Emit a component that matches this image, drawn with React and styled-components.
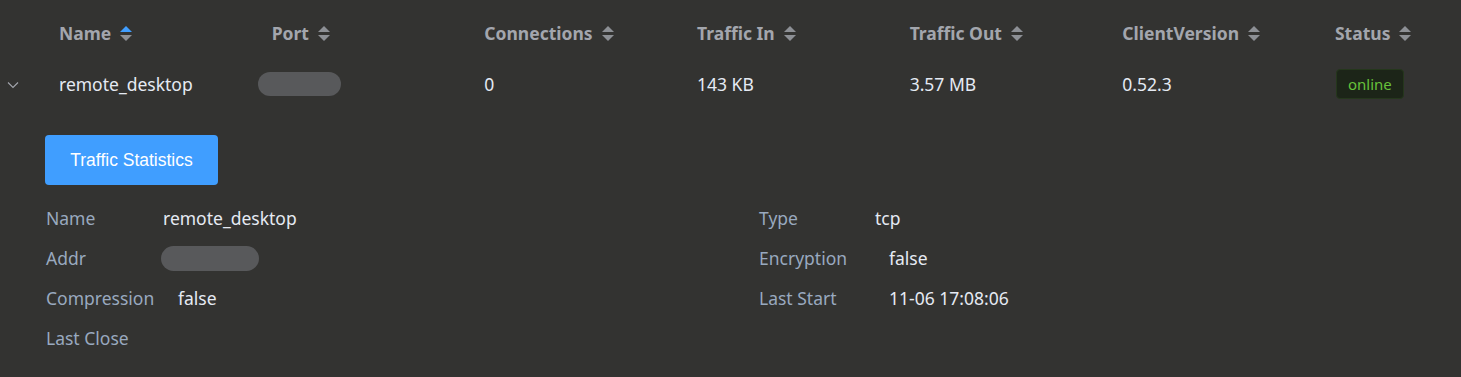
import React from 'react';
import styled, { createGlobalStyle } from 'styled-components';

const GlobalStyle = createGlobalStyle`
    html, body {
        margin: 0;
        padding: 0;
        background: #333331;
        overflow: hidden;
    }
    body {
        font-family: "Noto Sans", "Open Sans", sans-serif;
    }
`;

const Table = styled.div`
    width: 1461px;
    height: 377px;
    background: #333331;
    color: #e5eaf3;
`;

const Row = styled.div`
    display: grid;
    grid-template-columns: 47px repeat(6, 212.67px) 1fr;
    align-items: center;
    height: ${props => props.head ? '66px' : '36px'};
`;

const HeadCell = styled.div`
    display: flex;
    align-items: center;
    padding-left: 12px;
    font-size: 17.5px;
    font-weight: 700;
    color: #a3a6ad;
    white-space: nowrap;
`;

const Cell = styled.div`
    display: flex;
    align-items: center;
    padding-left: 12px;
    font-size: 17.5px;
    color: #e5eaf3;
    white-space: nowrap;
`;

const ExpandCell = styled.div`
    display: flex;
    align-items: center;
    justify-content: flex-start;
    padding-left: 7px;
    padding-top: 2px;
`;

const Carets = styled.span`
    display: inline-flex;
    flex-direction: column;
    gap: 3px;
    margin-left: 9px;
`;

const Blob = styled.span`
    display: inline-block;
    width: ${props => props.w}px;
    height: ${props => props.h}px;
    margin-left: ${props => props.shift || 0}px;
    border-radius: 999px;
    background: #58595b;
`;

const Tag = styled.span`
    display: inline-flex;
    align-items: center;
    height: 28px;
    padding: 0 11px;
    margin-left: 1px;
    border: 1px solid #25371c;
    border-radius: 4px;
    background: #1c2518;
    color: #67c23a;
    font-size: 15px;
`;

const Expanded = styled.div`
    padding: 33px 0 0 45px;
`;

const Button = styled.button`
    display: block;
    width: 173px;
    height: 50px;
    border: none;
    border-radius: 4px;
    background: #409eff;
    color: #ffffff;
    font-family: "Liberation Sans", Arial, sans-serif;
    font-size: 17.5px;
    cursor: pointer;
`;

const DescGrid = styled.div`
    display: grid;
    grid-template-columns: 713px 1fr;
    margin-top: 13px;
    padding-left: 1px;
`;

const DescItem = styled.div`
    display: flex;
    align-items: center;
    height: 40px;
    font-size: 17.5px;
`;

const Label = styled.span`
    width: ${props => props.w}px;
    flex-shrink: 0;
    color: #99a9bf;
    white-space: nowrap;
`;

const Value = styled.span`
    color: #e5eaf3;
    display: inline-flex;
    align-items: center;
`;

const SortIcon = ({ active }) => (
    <Carets>
        <svg width="12" height="6" viewBox="0 0 12 6">
            <path d="M0 6 L6 0 L12 6 Z" fill={active ? '#409eff' : '#8d9095'} />
        </svg>
        <svg width="12" height="6" viewBox="0 0 12 6">
            <path d="M0 0 L12 0 L6 6 Z" fill="#8d9095" />
        </svg>
    </Carets>
);

const Chevron = () => (
    <svg width="12" height="8" viewBox="0 0 12 8">
        <path d="M1 1.5 L6 6.5 L11 1.5" fill="none" stroke="#a3a6ad" strokeWidth="1.1" />
    </svg>
);

const columns = ['Name', 'Port', 'Connections', 'Traffic In', 'Traffic Out', 'ClientVersion', 'Status'];

const details = [
    { label: 'Name', w: 117, value: 'remote_desktop' },
    { label: 'Type', w: 116, value: 'tcp' },
    { label: 'Addr', w: 115, blob: true },
    { label: 'Encryption', w: 130, value: 'false' },
    { label: 'Compression', w: 132, value: 'false' },
    { label: 'Last Start', w: 130, value: '11-06 17:08:06' },
    { label: 'Last Close', w: 117, value: '' },
];

export default function App() {
    return (
        <Table>
            <GlobalStyle />
            <Row head>
                <div />
                {columns.map((c, i) => (
                    <HeadCell key={c}>
                        {c}
                        <SortIcon active={i === 0} />
                    </HeadCell>
                ))}
            </Row>
            <Row>
                <ExpandCell><Chevron /></ExpandCell>
                <Cell>remote_desktop</Cell>
                <Cell><Blob w={83} h={24} shift={-14} /></Cell>
                <Cell>0</Cell>
                <Cell>143 KB</Cell>
                <Cell>3.57 MB</Cell>
                <Cell>0.52.3</Cell>
                <Cell><Tag>online</Tag></Cell>
            </Row>
            <Expanded>
                <Button>Traffic Statistics</Button>
                <DescGrid>
                    {details.map(d => (
                        <DescItem key={d.label}>
                            <Label w={d.w}>{d.label}</Label>
                            <Value>{d.blob ? <Blob w={98} h={25} /> : d.value}</Value>
                        </DescItem>
                    ))}
                </DescGrid>
            </Expanded>
        </Table>
    );
}
